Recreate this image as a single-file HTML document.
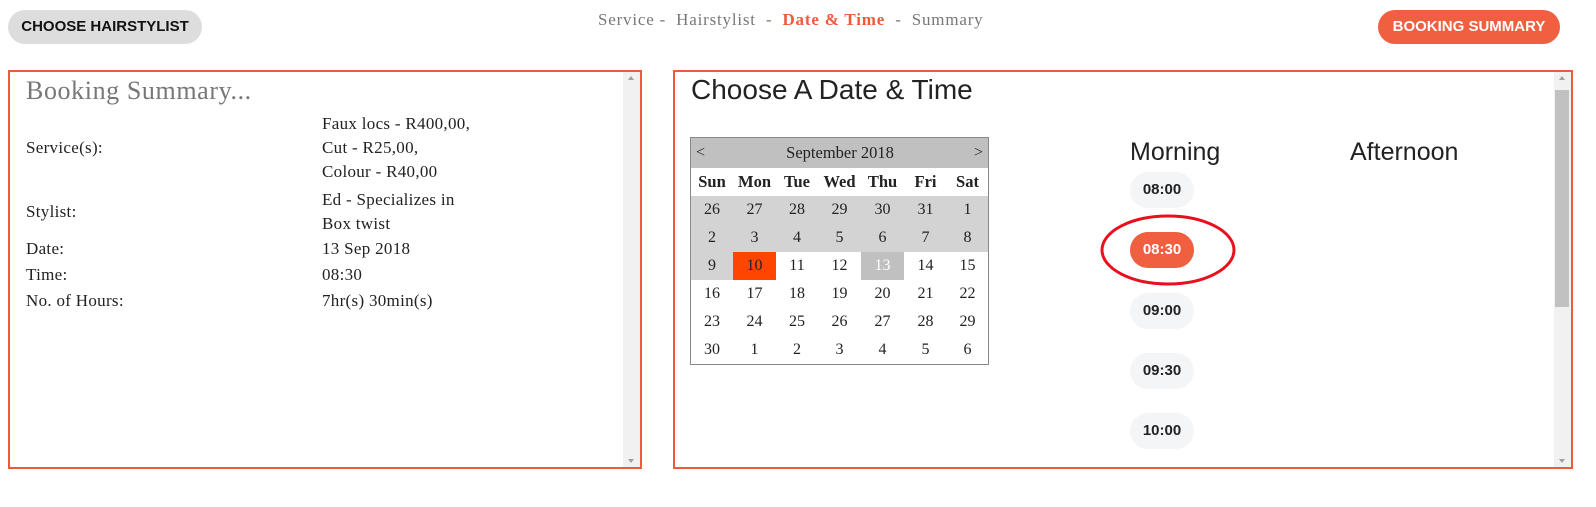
<!DOCTYPE html>
<html><head><style>
*{margin:0;padding:0;box-sizing:border-box}
body{width:1596px;height:507px;background:#fff;position:relative;overflow:hidden;font-family:"Liberation Serif",serif;color:#222}
.abs{position:absolute}
.btn{position:absolute;top:10px;height:34px;border-radius:17px;font-family:"Liberation Sans",sans-serif;font-weight:bold;font-size:15px;line-height:34px;text-align:center}
.panel{position:absolute;top:70px;height:399px;border:2px solid #f05a3c}
.sb{position:absolute;top:0;right:0;width:17px;height:100%;background:#f1f1f1}
.lbl{position:absolute;font-size:17px;letter-spacing:0.3px;white-space:nowrap}
.cal{position:absolute;left:690px;top:137px;width:299px;border:1px solid #888;font-size:16px}
.cal table{border-collapse:collapse;width:100%;table-layout:fixed}
.cal td{height:28px;text-align:center;padding:0}
.g{background:#d3d3d3}
.pill{position:absolute;left:1130px;width:64px;height:36px;border-radius:18px;background:#f4f5f7;font-family:"Liberation Sans",sans-serif;font-weight:bold;font-size:15px;line-height:36px;text-align:center;color:#222}
.sans{font-family:"Liberation Sans","DejaVu Sans",sans-serif}
</style></head><body>
<div class="btn" style="left:8px;width:194px;background:#ddd;color:#111">CHOOSE HAIRSTYLIST</div>
<div class="btn" style="left:1378px;width:182px;background:#f05f40;color:#fff">BOOKING SUMMARY</div>
<div class="abs" style="left:598px;top:10px;font-size:17px;letter-spacing:0.8px;color:#777;white-space:nowrap">Service - &nbsp;Hairstylist &nbsp;- &nbsp;<span style="color:#f05a3c;font-weight:bold">Date &amp; Time</span> &nbsp;- &nbsp;Summary</div>

<div class="panel" style="left:8px;width:634px">
 <div class="sb"><div style="position:absolute;top:4px;left:5px;border:3px solid transparent;border-bottom:4px solid #a0a0a0;border-top:none"></div><div style="position:absolute;bottom:4px;left:5px;border:3px solid transparent;border-top:4px solid #a0a0a0;border-bottom:none"></div></div>
</div>
<div class="abs" style="left:26px;top:76px;font-size:26px;letter-spacing:0.6px;color:#777">Booking Summary...</div>
<div class="lbl" style="left:26px;top:138px">Service(s):</div>
<div class="lbl" style="left:26px;top:202px">Stylist:</div>
<div class="lbl" style="left:26px;top:239px">Date:</div>
<div class="lbl" style="left:26px;top:265px">Time:</div>
<div class="lbl" style="left:26px;top:291px">No. of Hours:</div>
<div class="lbl" style="left:322px;top:114px">Faux locs - R400,00,</div>
<div class="lbl" style="left:322px;top:138px">Cut - R25,00,</div>
<div class="lbl" style="left:322px;top:162px">Colour - R40,00</div>
<div class="lbl" style="left:322px;top:190px">Ed - Specializes in</div>
<div class="lbl" style="left:322px;top:214px">Box twist</div>
<div class="lbl" style="left:322px;top:239px">13 Sep 2018</div>
<div class="lbl" style="left:322px;top:265px">08:30</div>
<div class="lbl" style="left:322px;top:291px">7hr(s) 30min(s)</div>

<div class="panel" style="left:673px;width:900px">
 <div class="sb"><div style="position:absolute;top:18px;left:1px;width:14px;height:217px;background:#c1c1c1"></div><div style="position:absolute;top:4px;left:5px;border:3px solid transparent;border-bottom:4px solid #a0a0a0;border-top:none"></div><div style="position:absolute;bottom:4px;left:5px;border:3px solid transparent;border-top:4px solid #a0a0a0;border-bottom:none"></div></div>
</div>
<div class="abs sans" style="left:691px;top:74px;font-size:28px;color:#222">Choose A Date &amp; Time</div>

<div class="cal">
<table>
<colgroup><col style="width:42px"><col style="width:43px"><col style="width:42px"><col style="width:43px"><col style="width:43px"><col style="width:43px"><col></colgroup>
<tr style="background:#c0c0c0"><td style="height:30px;text-align:left;padding-left:5px">&lt;</td><td colspan="5" style="font-size:16.5px">September 2018</td><td style="text-align:right;padding-right:5px">&gt;</td></tr>
<tr style="font-weight:bold;font-size:16.5px"><td>Sun</td><td>Mon</td><td>Tue</td><td>Wed</td><td>Thu</td><td>Fri</td><td>Sat</td></tr>
<tr class="g"><td>26</td><td>27</td><td>28</td><td>29</td><td>30</td><td>31</td><td>1</td></tr>
<tr class="g"><td>2</td><td>3</td><td>4</td><td>5</td><td>6</td><td>7</td><td>8</td></tr>
<tr><td class="g">9</td><td style="background:#ff4500">10</td><td>11</td><td>12</td><td style="background:#c0c0c0;color:#fff">13</td><td>14</td><td>15</td></tr>
<tr><td>16</td><td>17</td><td>18</td><td>19</td><td>20</td><td>21</td><td>22</td></tr>
<tr><td>23</td><td>24</td><td>25</td><td>26</td><td>27</td><td>28</td><td>29</td></tr>
<tr><td>30</td><td>1</td><td>2</td><td>3</td><td>4</td><td>5</td><td>6</td></tr>
</table></div>

<div class="abs sans" style="left:1130px;top:138px;font-size:25px;color:#222">Morning</div>
<div class="abs sans" style="left:1350px;top:138px;font-size:25px;color:#222">Afternoon</div>
<div class="pill" style="top:172px">08:00</div>
<div class="pill" style="top:232px;background:#f05f40;color:#fff">08:30</div>
<div class="pill" style="top:293px">09:00</div>
<div class="pill" style="top:353px">09:30</div>
<div class="pill" style="top:413px">10:00</div>
<svg class="abs" style="left:1090px;top:205px" width="160" height="90"><ellipse cx="78" cy="45" rx="66" ry="34" fill="none" stroke="#e8101c" stroke-width="3"/></svg>
</body></html>
